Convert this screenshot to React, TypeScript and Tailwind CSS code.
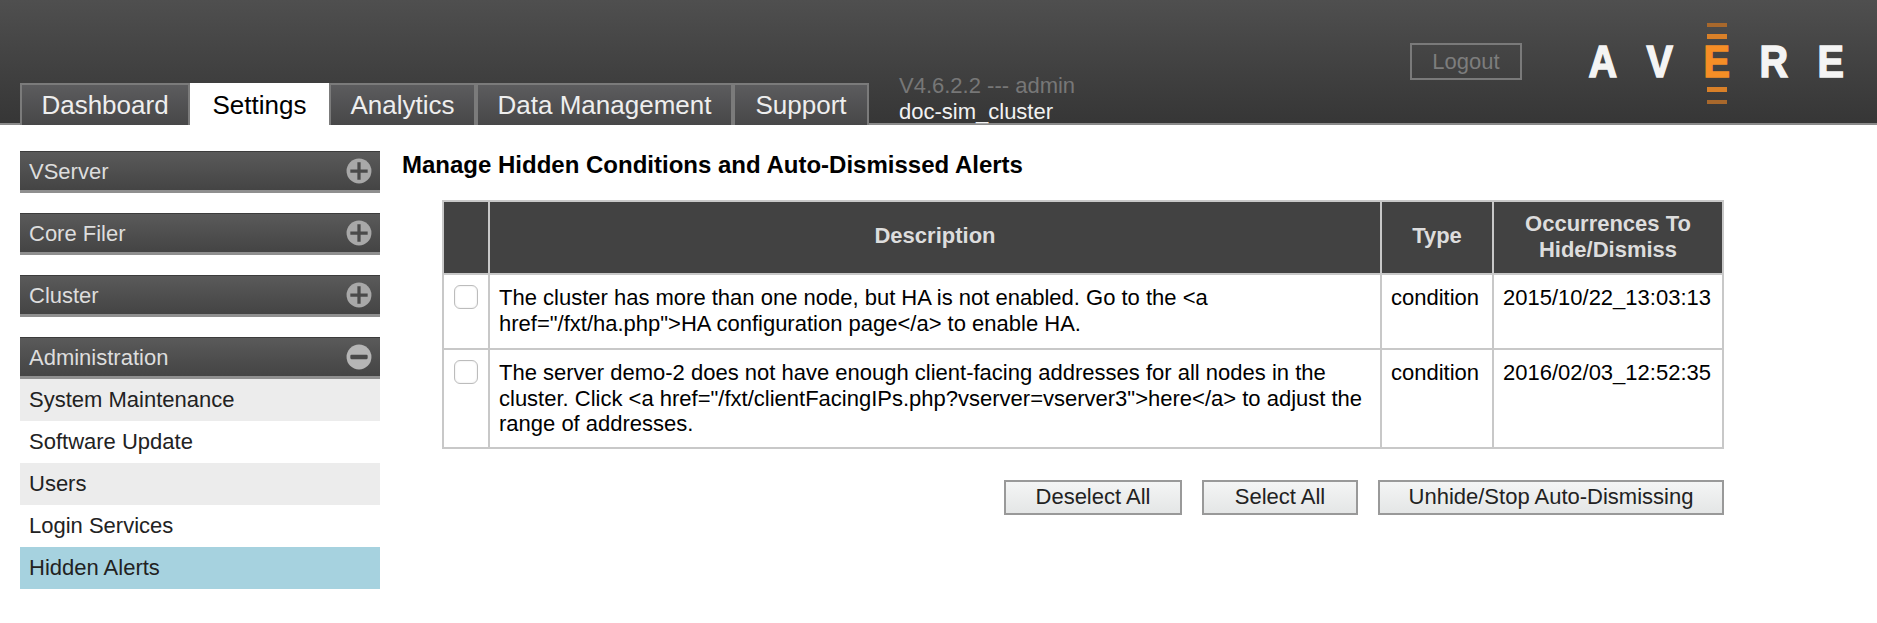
const font = "font-['Liberation_Sans',Arial,sans-serif]";

const tabs = [
  { label: "Dashboard", width: "w-[170px]" },
  { label: "Settings", width: "w-[139px]", active: true },
  { label: "Analytics", width: "w-[147px]" },
  { label: "Data Management", width: "w-[257px]" },
  { label: "Support", width: "w-[136px]" },
];

const sections = ["VServer", "Core Filer", "Cluster"];

const adminItems = [
  { label: "System Maintenance", className: "bg-[#ececec]" },
  { label: "Software Update", className: "bg-white" },
  { label: "Users", className: "bg-[#ececec]" },
  { label: "Login Services", className: "bg-white" },
  { label: "Hidden Alerts", className: "bg-[#a6d2df]" },
];

const rows = [
  {
    description: (
      <>
        The cluster has more than one node, but HA is not enabled. Go to the &lt;a
        <br />
        href="/fxt/ha.php"&gt;HA configuration page&lt;/a&gt; to enable HA.
      </>
    ),
    type: "condition",
    occurrence: "2015/10/22_13:03:13",
    height: "h-[75px]",
  },
  {
    description: (
      <>
        The server demo-2 does not have enough client-facing addresses for all nodes in the
        <br />
        cluster. Click &lt;a href="/fxt/clientFacingIPs.php?vserver=vserver3"&gt;here&lt;/a&gt; to adjust the
        <br />
        range of addresses.
      </>
    ),
    type: "condition",
    occurrence: "2016/02/03_12:52:35",
    height: "h-[99px]",
  },
];

function ToggleIcon({ open }: { open?: boolean }) {
  return (
    <svg width="26" height="26" viewBox="0 0 24 24" className="shrink-0">
      <circle cx="12" cy="12" r="11.5" fill={open ? "#b5b5b5" : "#a8a8a8"} />
      {open ? (
        <rect x="4" y="10" width="16" height="4" rx="1" fill="#4a4a4a" />
      ) : (
        <path d="M10.5 4h3v6.5H20v3h-6.5V20h-3v-6.5H4v-3h6.5z" fill="#4a4a4a" />
      )}
    </svg>
  );
}

function SectionHeader({ label, open }: { label: string; open?: boolean }) {
  return (
    <div className="flex h-[42px] items-center justify-between border-t border-b-[3px] border-t-[#3c3c3c] border-b-[#8f8f8f] bg-gradient-to-b from-[#5a5a5a] to-[#444444] pr-[8px] pl-[9px] text-[22px] text-[#dddddd]">
      <span>{label}</span>
      <ToggleIcon open={open} />
    </div>
  );
}

function LogoBar({ className }: { className: string }) {
  return <span className={`absolute left-1/2 w-[20px] -translate-x-1/2 ${className}`} />;
}

function LogoLetter({ letter }: { letter: string }) {
  return <span className="inline-block scale-x-[0.9] [-webkit-text-stroke:1.5px_currentColor]">{letter}</span>;
}

function Logo() {
  return (
    <div className="flex h-[37px] text-[44px] leading-[37px] font-bold text-[#f4f4f4]">
      <span className="w-[57px] text-center">
        <LogoLetter letter="A" />
      </span>
      <span className="w-[57px] text-center">
        <LogoLetter letter="V" />
      </span>
      <span className="relative w-[57px] text-center text-[#f68e26]">
        <LogoLetter letter="E" />
        <LogoBar className="top-[-20px] h-[4px] bg-[#a8682c]" />
        <LogoBar className="top-[-9px] h-[5px] bg-[#d98028]" />
        <LogoBar className="top-[44px] h-[5px] bg-[#d98028]" />
        <LogoBar className="top-[57px] h-[4px] bg-[#a8682c]" />
      </span>
      <span className="w-[57px] text-center">
        <LogoLetter letter="R" />
      </span>
      <span className="w-[57px] text-center">
        <LogoLetter letter="E" />
      </span>
    </div>
  );
}

function ActionButton({ label, width }: { label: string; width: string }) {
  return (
    <button
      className={`h-[35px] ${width} border-2 border-[#999999] bg-gradient-to-b from-[#f4f5f5] to-[#e4e6e6] pb-[1px] text-[22px] leading-[26px] text-[#222222]`}
    >
      {label}
    </button>
  );
}

export default function App() {
  return (
    <div className={`${font} min-h-[623px] bg-white text-black`}>
      <header className="flex h-[125px] border-b-2 border-[#8a8a8a] bg-gradient-to-b from-[#4f4f4f] to-[#363636] pl-[20px]">
        <nav className="flex shrink-0 items-end">
          {tabs.map((tab) =>
            tab.active ? (
              <div
                key={tab.label}
                className={`${tab.width} relative -mb-[4px] flex h-[44px] items-center justify-center bg-white text-[26px] text-black`}
              >
                {tab.label}
              </div>
            ) : (
              <div
                key={tab.label}
                className={`${tab.width} -mb-[2px] flex h-[42px] items-center justify-center border-2 border-b-0 border-[#7b7b7b] bg-gradient-to-b from-[#5c5c5e] to-[#474748] text-[26px] text-[#eeeeee]`}
              >
                {tab.label}
              </div>
            ),
          )}
        </nav>
        <div className="-mb-[2px] ml-[30px] flex flex-col justify-end text-[22px] leading-[26px]">
          <div className="text-[#777777]">V4.6.2.2 --- admin</div>
          <div className="text-[#f2f2f2]">doc-sim_cluster</div>
        </div>
        <div className="ml-auto flex items-start pt-[43px] pr-[18px]">
          <div className="mr-[52px] flex h-[37px] w-[112px] items-center justify-center border-2 border-[#7a7a7a] text-[22px] text-[#7d7d7d]">
            Logout
          </div>
          <Logo />
        </div>
      </header>

      <main className="flex pt-[26px] pl-[20px]">
        <aside className="flex w-[360px] shrink-0 flex-col gap-5">
          {sections.map((section) => (
            <SectionHeader key={section} label={section} />
          ))}
          <div>
            <SectionHeader label="Administration" open />
            {adminItems.map((item) => (
              <div
                key={item.label}
                className={`flex h-[42px] items-center pb-[2px] pl-[9px] text-[22px] text-[#222222] ${item.className}`}
              >
                {item.label}
              </div>
            ))}
          </div>
        </aside>

        <section className="ml-[22px] flex-1">
          <h1 className="mt-[1px] text-[24px] leading-[26px] font-bold">
            Manage Hidden Conditions and Auto-Dismissed Alerts
          </h1>
          <div className="mt-[22px] ml-[40px] w-[1282px]">
            <table className="w-full table-fixed border-collapse border-2 border-[#c8c8c8] text-[22px] leading-[25.5px]">
              <colgroup>
                <col className="w-[46px]" />
                <col className="w-[892px]" />
                <col className="w-[112px]" />
                <col />
              </colgroup>
              <thead>
                <tr className="h-[73px] bg-[#424242] text-[#dddddd]">
                  <th className="border-2 border-[#c8c8c8]" />
                  <th className="border-2 border-[#c8c8c8] pb-[3px]">Description</th>
                  <th className="border-2 border-[#c8c8c8] pb-[3px]">Type</th>
                  <th className="border-2 border-[#c8c8c8] px-2 pb-[2px]">Occurrences To Hide/Dismiss</th>
                </tr>
              </thead>
              <tbody>
                {rows.map((row) => (
                  <tr key={row.occurrence} className={row.height}>
                    <td className="border-2 border-[#c8c8c8] pt-[10px] pl-[10px] align-top">
                      <input
                        type="checkbox"
                        className="block h-[24px] w-[24px] appearance-none rounded-[6px] border border-[#bcbcbc] bg-white shadow-[inset_0_0_2px_rgba(0,0,0,0.12)]"
                      />
                    </td>
                    <td className="border-2 border-[#c8c8c8] pt-[10px] pl-[9px] align-top whitespace-nowrap">
                      {row.description}
                    </td>
                    <td className="border-2 border-[#c8c8c8] pt-[10px] pl-[9px] align-top">{row.type}</td>
                    <td className="border-2 border-[#c8c8c8] pt-[10px] pr-[2px] text-center align-top whitespace-nowrap">
                      {row.occurrence}
                    </td>
                  </tr>
                ))}
              </tbody>
            </table>
            <div className="mt-[31px] flex justify-end gap-5">
              <ActionButton label="Deselect All" width="w-[178px]" />
              <ActionButton label="Select All" width="w-[156px]" />
              <ActionButton label="Unhide/Stop Auto-Dismissing" width="w-[346px]" />
            </div>
          </div>
        </section>
      </main>
    </div>
  );
}
